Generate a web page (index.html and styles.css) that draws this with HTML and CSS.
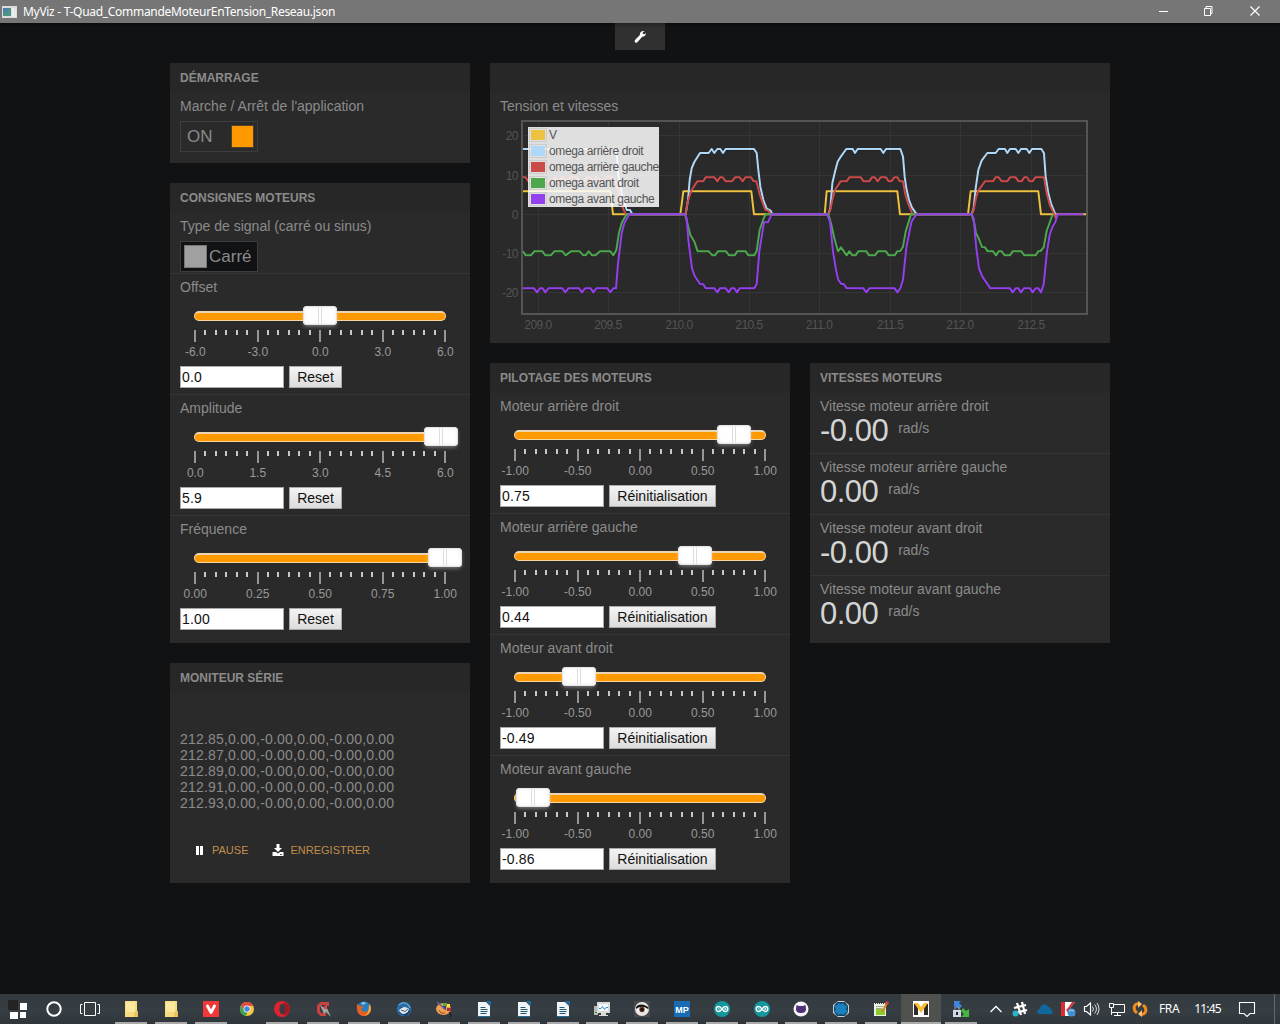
FILE: index.html
```html
<!DOCTYPE html>
<html lang="fr">
<head>
<meta charset="utf-8">
<title>MyViz - T-Quad_CommandeMoteurEnTension_Reseau.json</title>
<link rel="stylesheet" href="styles.css">
</head>
<body>
<svg class="defs" width="0" height="0">
  <defs>
    <g id="ticks">
      <path class="tick-minor" d="M11 0v5M22 0v5M32 0v5M43 0v5M53 0v5M74 0v5M84 0v5M95 0v5M105 0v5M116 0v5M136 0v5M147 0v5M157 0v5M168 0v5M178 0v5M199 0v5M209 0v5M220 0v5M230 0v5M241 0v5"/>
      <path class="tick-major" d="M1 0v12M64 0v12M126 0v12M189 0v12M251 0v12"/>
    </g>
    <g id="folder"><path fill="#f7dc7e" d="M2 0h12v16H2z"/><path fill="#fbe89f" d="M3 1h9v10H3z"/><path fill="#e8c45a" d="M12 10h3v6h-4z"/></g>
    <g id="doc"><path fill="#eef4f7" d="M2 1h8l4 4v11H2z"/><path fill="#1d6e9e" d="M10 0h5v5zM2 15h12v1H2z"/><path stroke="#28556e" d="M4.500 6.500h5M4.500 8.500h7M4.500 10.500h7M4.500 12.500h6"/></g>
    <g id="arduino"><circle cx="8" cy="8" r="8" fill="#11979c"/><path d="M8 8C6.500 6 5.700 5.500 4.700 5.500a2.500 2.500 0 000 5C5.700 10.500 6.500 10 8 8s2.300-2.500 3.300-2.500a2.500 2.500 0 010 5C10.300 10.500 9.500 10 8 8z" fill="none" stroke="#fff" stroke-width="1.400"/><path d="M3.800 8h2M10.200 8h2.200M11.300 7v2" stroke="#fff" stroke-width=".8"/></g>
  </defs>
</svg>

<header class="titlebar">
  <svg class="app-icon" width="16" height="14" viewBox="0 0 16 14"><path fill="#d9dde0" d="M0 1h15v12H0z"/><path fill="#4d9488" d="M1 3h8v8H1z"/><path fill="#4f7fa8" d="M1 3h6l-3 4H1z"/><path fill="#eef0f0" d="M10 3h2v9h-2zM13 4h1v8h-1z"/></svg>
  <span class="window-title">MyViz - T-Quad_CommandeMoteurEnTension_Reseau.json</span>
  <div class="window-buttons">
    <svg width="12" height="12" viewBox="0 0 12 12"><path d="M2 5.500h9" stroke="#fff"/></svg>
    <svg width="12" height="12" viewBox="0 0 12 12"><path d="M1.500 2.500h6v7h-6zM3 2.500V.5h6v7H7.500" fill="none" stroke="#fff"/></svg>
    <svg width="12" height="12" viewBox="0 0 12 12"><path d="M1.500 .5l9 9M10.500 .5l-9 9" stroke="#fff" stroke-width="1.200"/></svg>
  </div>
</header>

<main class="app">
  <div class="settings-tab"><svg width="14" height="14" viewBox="0 0 14 14"><path fill="#fff" d="M9.200 1.300C11 .7 11.500 1 11.500 1L9.600 2.800l.3 1.300 1.500.2 1.300-1.300c.3 1.800-.8 3.900-3.500 3.700L4.300 12.200c-1.600 1.400-3.600-.3-2.300-2.100L6.900 5C6.700 3.300 7.500 1.900 9.200 1.300z"/></svg></div>
  <div class="board">
    <div class="column">
      <section class="panel h100">
        <h2>DÉMARRAGE</h2>
        <div class="widget">
          <h3>Marche / Arrêt de l'application</h3>
          <div class="switch on"><span>ON</span><i></i></div>
        </div>
      </section>
      <section class="panel h460">
        <h2>CONSIGNES MOTEURS</h2>
        <div class="widget short">
          <h3>Type de signal (carré ou sinus)</h3>
          <div class="switch off"><i></i><span>Carré</span></div>
        </div>
        <div class="widget tall">
          <h3>Offset</h3>
          <div class="slider"><div class="handle" style="left:109px"></div></div>
          <svg class="scale" width="252" height="12"><use href="#ticks"/></svg>
          <div class="labels"><span>-6.0</span><span>-3.0</span><span>0.0</span><span>3.0</span><span>6.0</span></div>
          <div class="controls"><input type="text" value="0.0"><button>Reset</button></div>
        </div>
        <div class="widget tall">
          <h3>Amplitude</h3>
          <div class="slider"><div class="handle" style="left:230px"></div></div>
          <svg class="scale" width="252" height="12"><use href="#ticks"/></svg>
          <div class="labels"><span>0.0</span><span>1.5</span><span>3.0</span><span>4.5</span><span>6.0</span></div>
          <div class="controls"><input type="text" value="5.9"><button>Reset</button></div>
        </div>
        <div class="widget tall">
          <h3>Fréquence</h3>
          <div class="slider"><div class="handle" style="left:234px"></div></div>
          <svg class="scale" width="252" height="12"><use href="#ticks"/></svg>
          <div class="labels"><span>0.00</span><span>0.25</span><span>0.50</span><span>0.75</span><span>1.00</span></div>
          <div class="controls"><input type="text" value="1.00"><button>Reset</button></div>
        </div>
      </section>
      <section class="panel h220">
        <h2>MONITEUR SÉRIE</h2>
        <div class="serial">
          <div>212.85,0.00,-0.00,0.00,-0.00,0.00</div>
          <div>212.87,0.00,-0.00,0.00,-0.00,0.00</div>
          <div>212.89,0.00,-0.00,0.00,-0.00,0.00</div>
          <div>212.91,0.00,-0.00,0.00,-0.00,0.00</div>
          <div>212.93,0.00,-0.00,0.00,-0.00,0.00</div>
        </div>
        <div class="actions">
          <svg width="8" height="12" viewBox="0 0 8 12"><path fill="#fff" d="M1 2h3v9H1zM5 2h3v9H5z"/></svg><span class="pause">PAUSE</span>
          <svg width="12" height="12" viewBox="0 0 12 12"><path fill="#fff" d="M4.500 0h3v4h2.500L6 8 2 4h2.500zM.5 8H4l2 1.500L8 8h3.500v4H.5z"/><path fill="#555" d="M8 10h2v1H8z"/></svg><span class="save">ENREGISTRER</span>
        </div>
      </section>
    </div>

    <div class="right">
      <section class="panel h280">
        <h2></h2>
        <div class="widget">
          <h3>Tension et vitesses</h3>
          <svg class="chart" width="600" height="218" viewBox="500 118 600 218">
            <path class="grid" d="M538.500 122v192M608.500 122v192M679.500 122v192M749.500 122v192M819.500 122v192M890.500 122v192M960.500 122v192M1031.500 122v192M522 135.500h565M522 175.500h565M522 214.500h565M522 253.500h565M522 292.500h565"/>
            <rect class="frame" x="522" y="121" width="565" height="193"/>
            <g class="series" transform="translate(485 60) scale(.33333)">
              <polyline stroke="#edc240" points="114,394 376,394 384,463 586,463 595,394 799,394 807,463 1019,463 1025,394 1237,394 1245,463 1449,463 1457,394 1660,394 1668,463 1803,463"/>
              <polyline stroke="#afd8f8" points="114,267 188,267 196,272 204,267 388,267 396,290 400,345 410,400 425,450 435,450 442,463 602,463 609,420 614,360 620,325 628,306 645,279 671,279 680,267 688,279 697,267 706,267 714,279 722,267 807,267 815,279 820,330 826,380 835,420 845,446 857,452 862,463 1030,463 1036,445 1042,370 1050,335 1058,305 1068,289 1084,267 1103,267 1110,279 1118,267 1187,267 1195,279 1203,267 1246,267 1254,290 1259,350 1264,385 1272,420 1281,443 1295,463 1460,463 1466,445 1472,385 1480,330 1490,302 1507,279 1532,279 1541,267 1560,267 1567,279 1575,267 1592,267 1600,279 1608,267 1625,267 1633,279 1641,267 1669,267 1677,280 1682,350 1690,400 1698,430 1711,463"/>
              <polyline stroke="#cb4b4b" points="114,352 122,352 130,364 145,364 155,352 175,352 184,364 202,364 211,352 220,364 232,352 246,364 255,352 274,352 283,364 297,364 306,352 315,352 324,364 334,352 355,364 364,352 384,352 392,364 400,395 412,440 422,463 602,463 607,430 613,410 620,390 637,364 655,364 662,352 688,352 697,364 705,352 713,352 722,364 741,364 750,352 764,352 773,364 781,352 798,352 806,364 814,364 824,403 835,435 841,450 850,452 857,463 1030,463 1036,450 1042,420 1050,390 1067,364 1085,364 1093,352 1127,352 1136,364 1153,364 1161,352 1169,352 1178,364 1187,352 1203,352 1211,364 1219,364 1228,352 1237,352 1244,364 1254,364 1260,400 1269,430 1283,463 1460,463 1466,450 1474,410 1480,392 1500,364 1524,364 1532,352 1541,352 1550,364 1567,364 1575,352 1592,352 1600,364 1610,364 1618,352 1626,352 1634,364 1643,364 1651,352 1677,352 1685,400 1695,437 1708,463 1711,473 1716,463"/>
              <polyline stroke="#4da74d" points="114,574 122,586 138,586 148,574 172,574 181,586 198,586 208,574 223,574 232,574 242,586 258,574 284,574 295,586 302,586 311,574 321,586 332,586 345,574 376,574 385,586 394,570 402,518 411,487 425,463 600,463 606,485 616,525 628,545 638,574 671,574 682,586 690,586 699,574 723,574 732,586 749,586 757,574 782,574 790,586 808,586 815,573 824,510 836,475 842,463 1030,463 1038,490 1048,535 1059,574 1068,562 1085,586 1093,574 1102,586 1112,586 1120,574 1144,574 1152,586 1170,586 1179,574 1203,574 1211,586 1229,586 1237,574 1246,573 1254,560 1262,515 1278,463 1460,463 1468,490 1473,520 1481,535 1491,561 1500,562 1508,574 1524,574 1533,586 1541,574 1550,574 1559,586 1575,586 1583,574 1609,574 1618,586 1652,586 1660,574 1667,573 1676,562 1685,513 1703,463"/>
              <polyline stroke="#9440ed" points="114,685 147,685 156,697 165,685 173,685 181,697 190,685 232,685 241,697 250,685 282,685 291,697 300,685 317,685 325,697 334,685 367,685 376,697 385,685 393,685 399,612 410,520 418,490 433,463 599,463 605,475 610,540 621,625 629,648 645,672 655,673 662,685 688,685 697,697 705,685 722,685 731,697 739,685 748,685 756,697 764,685 808,685 815,673 823,575 837,487 849,487 860,463 1026,463 1035,485 1044,575 1053,630 1060,660 1068,671 1077,673 1085,685 1135,685 1144,697 1153,685 1229,685 1237,697 1246,685 1254,660 1264,563 1279,487 1287,473 1296,463 1460,463 1466,475 1474,565 1482,625 1492,650 1516,685 1575,685 1583,697 1592,685 1600,685 1608,697 1617,685 1635,685 1643,697 1652,685 1660,685 1668,697 1676,673 1686,575 1694,525 1702,502 1711,487 1718,463 1795,463"/>
            </g>
            <rect x="528" y="127" width="131" height="80" fill="#fff" opacity=".85"/>
            <g class="swatches">
              <rect x="529.500" y="128.500" width="17" height="13"/><rect x="529.500" y="144.500" width="17" height="13"/><rect x="529.500" y="160.500" width="17" height="13"/><rect x="529.500" y="176.500" width="17" height="13"/><rect x="529.500" y="192.500" width="17" height="13"/>
            </g>
            <path fill="#edc240" d="M531 130h14v10h-14z"/><path fill="#afd8f8" d="M531 146h14v10h-14z"/><path fill="#cb4b4b" d="M531 162h14v10h-14z"/><path fill="#4da74d" d="M531 178h14v10h-14z"/><path fill="#9440ed" d="M531 194h14v10h-14z"/>
            <g class="legend"><text x="549" y="139">V</text><text x="549" y="155">omega arrière droit</text><text x="549" y="171">omega arrière gauche</text><text x="549" y="187">omega avant droit</text><text x="549" y="203">omega avant gauche</text></g>
            <g class="axis-y"><text x="518" y="140">20</text><text x="518" y="180">10</text><text x="518" y="219">0</text><text x="518" y="258">-10</text><text x="518" y="297">-20</text></g>
            <g class="axis-x"><text x="538" y="329">209.0</text><text x="608" y="329">209.5</text><text x="679" y="329">210.0</text><text x="749" y="329">210.5</text><text x="819" y="329">211.0</text><text x="890" y="329">211.5</text><text x="960" y="329">212.0</text><text x="1031" y="329">212.5</text></g>
          </svg>
        </div>
      </section>
      <div class="lower">
        <section class="panel h520">
          <h2>PILOTAGE DES MOTEURS</h2>
          <div class="widget tall">
            <h3>Moteur arrière droit</h3>
            <div class="slider"><div class="handle" style="left:203px"></div></div>
            <svg class="scale" width="252" height="12"><use href="#ticks"/></svg>
            <div class="labels"><span>-1.00</span><span>-0.50</span><span>0.00</span><span>0.50</span><span>1.00</span></div>
            <div class="controls"><input type="text" value="0.75"><button class="long">Réinitialisation</button></div>
          </div>
          <div class="widget tall">
            <h3>Moteur arrière gauche</h3>
            <div class="slider"><div class="handle" style="left:164px"></div></div>
            <svg class="scale" width="252" height="12"><use href="#ticks"/></svg>
            <div class="labels"><span>-1.00</span><span>-0.50</span><span>0.00</span><span>0.50</span><span>1.00</span></div>
            <div class="controls"><input type="text" value="0.44"><button class="long">Réinitialisation</button></div>
          </div>
          <div class="widget tall">
            <h3>Moteur avant droit</h3>
            <div class="slider"><div class="handle" style="left:48px"></div></div>
            <svg class="scale" width="252" height="12"><use href="#ticks"/></svg>
            <div class="labels"><span>-1.00</span><span>-0.50</span><span>0.00</span><span>0.50</span><span>1.00</span></div>
            <div class="controls"><input type="text" value="-0.49"><button class="long">Réinitialisation</button></div>
          </div>
          <div class="widget tall">
            <h3>Moteur avant gauche</h3>
            <div class="slider"><div class="handle" style="left:2px"></div></div>
            <svg class="scale" width="252" height="12"><use href="#ticks"/></svg>
            <div class="labels"><span>-1.00</span><span>-0.50</span><span>0.00</span><span>0.50</span><span>1.00</span></div>
            <div class="controls"><input type="text" value="-0.86"><button class="long">Réinitialisation</button></div>
          </div>
        </section>
        <section class="panel h280">
          <h2>VITESSES MOTEURS</h2>
          <div class="widget short"><h3>Vitesse moteur arrière droit</h3><div class="reading"><b>-0.00</b><span>rad/s</span></div></div>
          <div class="widget short"><h3>Vitesse moteur arrière gauche</h3><div class="reading"><b>0.00</b><span>rad/s</span></div></div>
          <div class="widget short"><h3>Vitesse moteur avant droit</h3><div class="reading"><b>-0.00</b><span>rad/s</span></div></div>
          <div class="widget short"><h3>Vitesse moteur avant gauche</h3><div class="reading"><b>0.00</b><span>rad/s</span></div></div>
        </section>
      </div>
    </div>
  </div>
</main>

<footer class="taskbar">
  <div class="item start"><svg width="20" height="20" viewBox="0 0 20 20"><path fill="#232323" d="M0 1h10v10H0z"/><path fill="#fff" d="M12 4h7v7h-7zM2 13h8v8H2zM12 13h6v6h-6z"/></svg></div>
  <div class="item start"><svg width="18" height="18" viewBox="0 0 18 18"><circle cx="9" cy="9" r="6.700" fill="none" stroke="#fff" stroke-width="2"/></svg></div>
  <div class="item start"><svg width="22" height="16" viewBox="0 0 22 16"><path d="M5.500 1.500h11v13h-11zM3.500 3.500h-2v9h2M18.500 3.500h2v9h-2" fill="none" stroke="#fff"/></svg></div>
  <div class="item gap open"><svg width="16" height="16" viewBox="0 0 16 16"><use href="#folder"/></svg></div>
  <div class="item open"><svg width="16" height="16" viewBox="0 0 16 16"><use href="#folder"/></svg></div>
  <div class="item open"><svg width="16" height="16" viewBox="0 0 16 16"><path fill="#ef3939" d="M0 0h16v16H0z"/><path d="M4.500 5L8 11.500 11.500 5" stroke="#fff" stroke-width="2.800" stroke-linecap="round" stroke-linejoin="round" fill="none"/></svg></div>
  <div class="item chrome"><svg width="16" height="16" viewBox="0 0 16 16"><circle cx="8" cy="8" r="7" fill="#f7c63b"/><path fill="#df4b3c" d="M2 4.400A7 7 0 0114.200 5H8L5 9.500z"/><path fill="#3aa655" d="M2 4.400L5.200 10 8.500 11l-1.500 4A7 7 0 012 4.400z"/><circle cx="8" cy="8" r="3.400" fill="#fff"/><circle cx="8" cy="8" r="2.700" fill="#4a83e0"/></svg></div>
  <div class="item open"><svg width="16" height="16" viewBox="0 0 16 16"><circle cx="8" cy="8" r="8" fill="#e0242f"/><path fill="#a81824" d="M10 1c8 3 8 11 0 14z"/><ellipse cx="8.300" cy="8" rx="2.900" ry="5.400" fill="#353d42"/></svg></div>
  <div class="item w41 open"><svg width="16" height="16" viewBox="0 0 16 16"><path d="M12.500 5V2.500H6L3.500 5v6L6 13.500h5" fill="none" stroke="#c94240" stroke-width="3"/><path fill="#a9a19d" d="M5 4l6 4 .5-2L16 16l-5-5-2 2z"/><path fill="#d24b46" d="M9 5l3-1v4H9z"/></svg></div>
  <div class="item w41 open"><svg width="16" height="16" viewBox="0 0 16 16"><circle cx="8" cy="7.500" r="7" fill="#297fbd"/><path fill="#8ec7e6" d="M5 2q3-2 5 0L7 4z"/><path fill="#e66022" d="M1 3l3 2 4 1-3 2c1 3 5 4 8 1l1-6c3 7-1 12-6 12S0 11 1 3z"/><path fill="#f9b13b" d="M13 3c4 5 1 11-5 12 4-2 5-5 5-12z"/></svg></div>
  <div class="item open"><svg width="16" height="16" viewBox="0 0 16 16"><circle cx="8" cy="8" r="7.300" fill="#286eab"/><path fill="#12365f" d="M3 12L5 6l7 0 2 5-4 4z"/><path fill="#dde4e8" d="M3 10c2-5 8-5 10-2-1 5-6 6-8 4z"/><path fill="none" stroke="#7eb8df" d="M3 4c4-4 9-2 11 3"/><path fill="none" stroke="#35608a" d="M5 9l4 1.500L12 8"/></svg></div>
  <div class="item open"><svg width="16" height="16" viewBox="0 0 16 16"><ellipse cx="7.500" cy="8" rx="7.500" ry="6" fill="#eda155"/><path fill="#64a83e" d="M7 2h4v3H7z"/><path fill="#ffdf3b" d="M11 3h3v3h-3z"/><path fill="#b32d34" d="M11 7h4v3h-4z"/><path fill="#263f85" d="M7 5h3v3H7z"/><path d="M1 1l9 8" stroke="#6b6786" stroke-width="1.600"/><path d="M13 11l2 3-1 2" stroke="#111" fill="none"/><path d="M3 9l2 3h4" stroke="#bc3f27" fill="none"/></svg></div>
  <div class="item open"><svg width="16" height="16" viewBox="0 0 16 16"><use href="#doc"/></svg></div>
  <div class="item w39 open"><svg width="16" height="16" viewBox="0 0 16 16"><use href="#doc"/></svg></div>
  <div class="item w39 open"><svg width="16" height="16" viewBox="0 0 16 16"><use href="#doc"/></svg></div>
  <div class="item open"><svg width="16" height="16" viewBox="0 0 16 16"><path fill="#b9bab6" d="M0 5h4v9H0z"/><path fill="#d9dad6" d="M3 1h13v11H3zM7 12h5v2h2v1H5v-1h2z"/><path fill="#f4faff" d="M5 3h9v7H5z"/><path d="M5 7.500h2l1.500-2 2 3 1.500-2h2" fill="none" stroke="#3192bc"/><path fill="#4b8a3d" d="M1 11h2v1H1z"/></svg></div>
  <div class="item open"><svg width="16" height="16" viewBox="0 0 16 16"><path fill="#4a4a4a" d="M0 0h16v16H0z"/><circle cx="8" cy="8" r="7" fill="#e6e6e6"/><path fill="#111" d="M2 6c3-4 9-3 13 1l-1 1C10 5 6 5 2 8z"/><path fill="#fff" d="M3 9c2-3 8-3 10 0-3 3-7 3-10 0z"/><circle cx="8" cy="8.500" r="2.700" fill="#6b331b"/><circle cx="8" cy="8.500" r="1.500" fill="#111"/></svg></div>
  <div class="item open"><svg width="16" height="16" viewBox="0 0 16 16"><path fill="#176cb3" d="M0 0h16v16H0z"/><text class="mp" x="1.200" y="11.500">MP</text></svg></div>
  <div class="item open"><svg width="16" height="16" viewBox="0 0 16 16"><use href="#arduino"/></svg></div>
  <div class="item w39 open"><svg width="16" height="16" viewBox="0 0 16 16"><use href="#arduino"/></svg></div>
  <div class="item open"><svg width="16" height="16" viewBox="0 0 16 16"><circle cx="8" cy="8" r="7.500" fill="#f6f5fa"/><path fill="#523077" d="M3.500 4l2.500 1h4l2.500-1 .5 4c0 3-2 4-5 4S3 11 3 8z"/></svg></div>
  <div class="item open"><svg width="16" height="16" viewBox="0 0 16 16"><path fill="#c6ced0" d="M5 0h6l5 4v8l-5 4H5l-5-4V4z"/><path fill="#164363" d="M4 1h8l3 4v6l-3 4H4l-3-4V5z"/><path fill="#1b80bb" d="M5 2l3 1 3-1v2l3 1-1 3 2 3-3 1-1 2-3-1-3 1-1-2-3-1 2-3-2-3 3-1z"/></svg></div>
  <div class="item open"><svg width="16" height="16" viewBox="0 0 16 16"><path fill="#edf0e6" d="M1 2h12v13H1z"/><path fill="#8ccc2e" d="M3 8h9v6H3z"/><path d="M2 2h10" stroke="#333" stroke-width="2" stroke-dasharray="1 1"/><path d="M3 5.500h7M3 7.500h6" stroke="#9caf8c"/><path d="M14 2L9 11" stroke="#d58a2c" stroke-width="2.400"/><path fill="#c84046" d="M13 0l3 1-1 3-3-1z"/></svg></div>
  <div class="item active open"><svg width="16" height="16" viewBox="0 0 16 16"><path fill="#fff" d="M0 0h16v16H0z"/><path fill="#302b29" d="M1 3h4v11H1zM11 3h4v11h-4z"/><path fill="#f8bd2e" d="M1 2h4l3 4 3-4h4L8 12z"/></svg></div>
  <div class="item open"><svg width="16" height="16" viewBox="0 0 16 16"><path fill="#3c87dc" d="M1 0h7L6 2l3 3-3 3-3-3-2 2z"/><path fill="#43b73e" d="M16 16H8l3-3-3-3 2-3 3 3 3-2z"/><path fill="#d2d8dd" d="M0 9h8v7H0z"/><path d="M2 9V7q2-3 4 0v2" fill="none" stroke="#8ca0b6"/><path fill="#192838" d="M3 11h2v3H3z"/></svg></div>

  <div class="tray">
    <svg class="t-chevron" width="14" height="12" viewBox="0 0 14 12"><path d="M1.500 9L7 3.500 12.500 9" fill="none" stroke="#fff" stroke-width="1.300"/></svg>
    <svg class="t-slack" width="16" height="16" viewBox="0 0 16 16"><path d="M5 2l4 12M10 1l3 12M2 7l12-3M3 12l12-3" stroke="#fff" stroke-width="2.200"/><circle cx="3.500" cy="12.500" r="3" fill="#28b6ce"/></svg>
    <svg class="t-cloud" width="16" height="12" viewBox="0 0 16 12"><path fill="#11689e" d="M3 11C-1 11-.5 6 3 6c0-5 7-6 8-2 3 0 3 2 3 3 3 1 2 4 0 4z"/></svg>
    <svg class="t-k" width="16" height="16" viewBox="0 0 16 16"><path fill="#fff" d="M1 1h14L10 7l5 8H1z"/><path fill="#df2c33" d="M1 1h4v14H1zM8 7l4-6h3l-5 6 5 8h-4L6 9z"/><circle cx="11.500" cy="11.500" r="4" fill="#3e91d5"/><path d="M9 10q3-2 5 0" stroke="#b7ddf7" fill="none"/></svg>
    <svg class="t-vol" width="17" height="16" viewBox="0 0 17 16"><path d="M1.500 5.500h2l4-3.500v12l-4-3.500h-2z" fill="none" stroke="#fff" stroke-width="1.200"/><path d="M9.500 5.500q2 2.500 0 5M11.700 3.500q3.500 4.500 0 9M14 2q4 6 0 12" fill="none" stroke="#ddd"/></svg>
    <svg class="t-net" width="17" height="16" viewBox="0 0 17 16"><path d="M6 3.500h10.500v8h-13V7M9.500 12v2M6 14.500h7M1.500 2.500h4v4h-4zM3.500 6v8" fill="none" stroke="#fff"/></svg>
    <svg class="t-sync" width="16" height="16" viewBox="0 0 16 16"><path d="M7 3C3 2 1 6 3 10l2 2M9 13c4 1 6-3 4-7l-2-2" fill="none" stroke="#f58a1d" stroke-width="3"/><path fill="#ffc26a" d="M6 0l4 3-4 4zM10 9l-4 4 4 3z"/></svg>
    <span class="lang">FRA</span>
    <span class="clock">11:45</span>
    <svg class="t-note" width="18" height="18" viewBox="0 0 18 18"><path d="M1.500 2.500h15v11H12l-3 3-3-3H1.500z" fill="none" stroke="#fff" stroke-width="1.100"/></svg>
    <div class="peek"></div>
  </div>
</footer>
</body>
</html>
```

FILE: styles.css
```css
* { box-sizing: border-box; }

body {
  margin: 0;
  width: 1280px;
  height: 1024px;
  overflow: hidden;
  display: flex;
  flex-direction: column;
  background: #111214;
  color: #8b8b8b;
  font-family: "Liberation Sans", Arial, sans-serif;
  font-size: 14px;
}

svg { display: block; flex: none; }
.defs { position: absolute; }

.titlebar {
  display: flex;
  align-items: center;
  height: 23px;
  flex: none;
  background: #767676;
  color: #fff;
  font: 12px/23px "Noto Sans", "Open Sans", sans-serif;
}
.app-icon { margin: 0 5px 0 2px; }
.window-title { letter-spacing: -0.3px; }
.window-buttons { display: flex; gap: 34px; margin-left: auto; padding-right: 19px; }

.app {
  flex: 1;
  display: flex;
  flex-direction: column;
  align-items: center;
  background: linear-gradient(#0b0c0d, #111214 4px);
}
.settings-tab {
  width: 50px;
  height: 27px;
  display: flex;
  align-items: center;
  justify-content: center;
  background: linear-gradient(#222, #303030 5px);
}
.board { display: flex; gap: 20px; margin-top: 13px; }
.column, .right { display: flex; flex-direction: column; gap: 20px; }
.lower { display: flex; align-items: flex-start; gap: 20px; }
.lower .panel, .column .panel { width: 300px; }
.panel { background: #2a2a2a; }
.h100 { height: 100px; }
.h220 { height: 220px; }
.h280 { height: 280px; }
.h460 { height: 460px; }
.h520 { height: 520px; }

h2 {
  margin: 0;
  height: 30px;
  padding: 0 10px;
  background: #272727;
  font-size: 12px;
  line-height: 31px;
}
h3 {
  margin: 0;
  height: 25px;
  font-size: 14px;
  font-weight: normal;
  line-height: 26px;
  white-space: nowrap;
}
.widget { padding: 0 10px; }
.short { height: 61px; border-bottom: 1px solid #353535; }
.tall { height: 121px; border-bottom: 1px solid #353535; }
.widget:last-child { border-bottom: 0; }

.switch {
  display: flex;
  align-items: center;
  width: 78px;
  height: 31px;
  margin-top: 3px;
  padding: 0 3px;
  border: 1px solid #3d3d3d;
  font-size: 17px;
}
.switch i { width: 23px; height: 23px; border: 1px solid #50402a; }
.on { justify-content: space-between; padding-left: 6px; }
.on i { background: #ff9900; }
.off { gap: 2px; background: #111214; }
.off i { background: #a0a0a0; border-color: #777; }

.slider {
  position: relative;
  width: 252px;
  height: 10px;
  margin: 12px 0 0 14px;
  border: 1px solid #f6d5a3;
  border-top: 2px solid #ecd5b2;
  border-radius: 5px;
  background: #ff9900;
}
.handle {
  position: absolute;
  top: -7px;
  margin-left: -1px;
  width: 34px;
  height: 19px;
  border: 1px solid #e3e3e3;
  border-radius: 3px;
  background: linear-gradient(90deg, transparent 14px, #ddd 14px 15px, transparent 15px 17px, #ddd 17px 18px, transparent 18px), #fff;
  box-shadow: 0 2px 4px -1px rgba(255, 255, 255, .45), inset 0 0 4px #eee;
}
.scale { margin: 9px 0 0 14px; }
.tick-minor { stroke: #c8c8c8; stroke-width: 2; }
.tick-major { stroke: #969696; stroke-width: 2; }
.labels {
  display: grid;
  grid-template-columns: repeat(5, 62.5px);
  width: 313px;
  margin: 3px 0 0 -16px;
  font-size: 12px;
  line-height: 14px;
  text-align: center;
  color: #999;
}
.controls { display: flex; gap: 5px; margin-top: 7px; }
.controls input, .controls button {
  height: 22px;
  margin: 0;
  border: 1px solid #a9a9a9;
  color: #111;
  font: 14px "Liberation Sans", Arial, sans-serif;
}
.controls input { width: 104px; padding: 0 1px; background: #fff; letter-spacing: .15px; }
.controls button { width: 53px; padding: 0; background: linear-gradient(#f4f4f4, #dcdcdc); }
.controls .long { width: 107px; }

.serial { padding: 38px 10px 0; line-height: 16px; letter-spacing: .195px; }
.actions {
  display: flex;
  align-items: center;
  margin-top: 33px;
  padding-left: 25px;
  color: #c08d4c;
  font-size: 11px;
  line-height: 12px;
}
.actions .pause { margin: 0 24px 0 9px; }
.actions .save { margin-left: 6px; }

.chart { font-size: 12px; }
.grid { fill: none; stroke: #353535; }
.frame { fill: none; stroke: #545454; stroke-width: 2; }
.series { fill: none; stroke-width: 6; stroke-linejoin: round; filter: drop-shadow(0 2px 1px rgba(0, 0, 0, .35)); }
.swatches { fill: none; stroke: #ccc; }
.legend { fill: #545454; letter-spacing: -.38px; }
.axis-x, .axis-y { fill: #545454; letter-spacing: -.5px; }
.axis-x { text-anchor: middle; }
.axis-y { text-anchor: end; }

.reading { display: flex; gap: 10px; line-height: 20px; }
.reading b { color: #d3d4d4; font-size: 31px; font-weight: normal; line-height: 25px; letter-spacing: -.5px; }

.taskbar {
  display: flex;
  flex: none;
  height: 30px;
  background: linear-gradient(#333a3f, #363d43 60%, #30363a);
  color: #fff;
}
.item { width: 40px; display: flex; align-items: center; justify-content: center; }
.start { width: 36px; }
.gap { margin-left: 3px; }
.chrome { width: 31px; }
.w41 { width: 41px; }
.w39 { width: 39px; }
.open { background: linear-gradient(#aaa, #aaa) center bottom / 32px 2px no-repeat; }
.active { background: linear-gradient(#aaa, #aaa) center bottom / 40px 2px no-repeat, #50504f; }
.mp { fill: #fff; font: bold 9px "Liberation Sans", sans-serif; }

.tray {
  flex: 1;
  display: flex;
  align-items: center;
  font: 12px/30px "Noto Sans", "Open Sans", sans-serif;
}
.t-chevron { margin-left: 8px; }
.t-slack { margin-left: 9px; }
.t-cloud { margin-left: 9px; }
.t-k { margin-left: 7px; }
.t-vol { margin-left: 7px; }
.t-net { margin-left: 8px; }
.t-sync { margin-left: 7px; }
.lang { margin-left: 11px; letter-spacing: -.4px; }
.clock { margin-left: 15px; letter-spacing: -.8px; }
.t-note { margin-left: auto; margin-right: 18px; }
.peek { width: 6px; height: 30px; border-left: 1px solid #656a6e; }
```
